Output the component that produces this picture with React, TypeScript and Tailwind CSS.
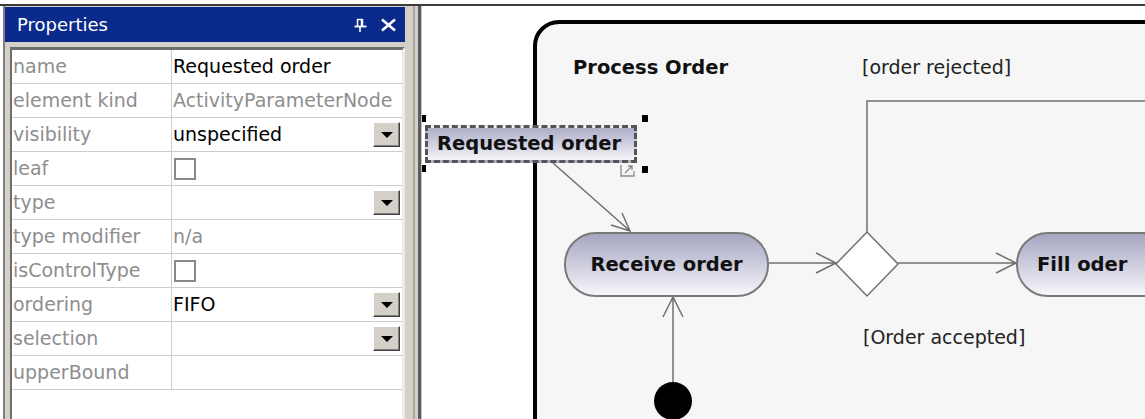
import React from "react";

type Row = {
  label: string;
  value?: string;
  muted?: boolean;
  dropdown?: boolean;
  checkbox?: boolean;
};

const rows: Row[] = [
  { label: "name", value: "Requested order" },
  { label: "element kind", value: "ActivityParameterNode", muted: true },
  { label: "visibility", value: "unspecified", dropdown: true },
  { label: "leaf", checkbox: true },
  { label: "type", dropdown: true },
  { label: "type modifier", value: "n/a", muted: true },
  { label: "isControlType", checkbox: true },
  { label: "ordering", value: "FIFO", dropdown: true },
  { label: "selection", dropdown: true },
  { label: "upperBound" },
];

const DropButton = () => (
  <div className="w-[27px] h-[25px] shrink-0 bg-[#d4d0c8] border border-t-white border-l-white border-b-[#404040] border-r-[#404040] shadow-[inset_-1px_-1px_0_#808080] flex items-center justify-center">
    <div className="w-0 h-0 border-l-[6px] border-r-[6px] border-t-[6px] border-l-transparent border-r-transparent border-t-black" />
  </div>
);

const PropertiesPanel = () => (
  <div className="w-[410px] shrink-0 bg-[#d4d0c8] border-l-2 border-[#808080] flex flex-col pt-[1px] pr-[8px]">
    <div className="h-[35px] shrink-0 bg-[#0a2a8c] flex items-center pl-[12px] pr-[8px] text-white text-[18px] leading-none">
      <span>Properties</span>
      <div className="ml-auto flex items-center gap-[13px]">
        <svg width="13" height="14" viewBox="0 0 13 14" fill="none" stroke="white">
          <path d="M3.5 1 V8 M8.5 1 V8 M3.5 1.5 H8.5" strokeWidth={1.5} />
          <path d="M7.5 1 V8" strokeWidth={1.5} />
          <path d="M0.5 8.5 H12.5" strokeWidth={1.8} />
          <path d="M6 9 V14" strokeWidth={1.6} />
        </svg>
        <svg width="17" height="14" viewBox="0 0 17 14" fill="none" stroke="white" strokeWidth={2.6}>
          <path d="M2 1.5 L15 12.5 M15 1.5 L2 12.5" />
        </svg>
      </div>
    </div>
    <div className="mt-[5px] ml-[5px] flex-1 bg-white border-t-[3px] border-l-2 border-t-[#6e6e6e] border-l-[#6e6e6e] border-r-[3px] border-r-[#ebebeb]">
      {rows.map((row) => (
        <div key={row.label} className="h-[34px] flex border-b border-[#cccccc]">
          <div className="w-[160px] shrink-0 border-r border-[#cccccc] flex items-center pl-[1px] text-[19px] leading-none text-[#8e8e8e] whitespace-nowrap overflow-hidden">
            {row.label}
          </div>
          <div className="flex-1 flex items-center pl-[1px] pr-[2px] text-[19px] leading-none whitespace-nowrap overflow-hidden">
            {row.checkbox && (
              <div className="ml-[1px] w-[22px] h-[22px] border-2 border-[#8a8a8a] bg-white" />
            )}
            {row.value && (
              <span className={row.muted ? "text-[#8e8e8e]" : "text-black"}>
                {row.value}
              </span>
            )}
            {row.dropdown && (
              <div className="ml-auto">
                <DropButton />
              </div>
            )}
          </div>
        </div>
      ))}
    </div>
  </div>
);

const Splitter = () => (
  <div className="w-[9px] shrink-0 flex">
    <div className="w-[2px] bg-[#a9a59d]" />
    <div className="w-[3px] bg-[#d4d0c8]" />
    <div className="w-[3px] bg-[#5c5c5c]" />
    <div className="w-[1px] bg-[#c4c4c4]" />
  </div>
);

const Diagram = () => (
  <div className="relative flex-1 overflow-hidden bg-white">
    <svg
      className="absolute left-0 top-0"
      width={723}
      height={413}
      viewBox="422 6 723 413"
    >
      {/* activity frame */}
      <path
        d="M535 440 V46 A24 24 0 0 1 559 22 H1160 V440 Z"
        fill="#f6f6f6"
        stroke="#000"
        strokeWidth={4}
      />
      <g fill="none" stroke="#707070" strokeWidth={1.5}>
        <path d="M553 163 L630 231 M611 225 L630 231 L622 213" />
        <path d="M769 263 H836 M816 253 L836 263 L816 273" />
        <path d="M898 263 H1016 M996 253 L1016 263 L996 273" />
        <path d="M867 232 V101 H1160" />
        <path d="M673 382 V297 M663 317 L673 297 L683 317" />
      </g>
      <path
        d="M867 232 L898 264 L867 296 L836 264 Z"
        fill="#fff"
        stroke="#707070"
        strokeWidth={1.5}
      />
      <circle cx={673} cy={401} r={19} fill="#000" />
    </svg>

    <div className="absolute left-[151px] top-[52px] font-bold text-[19.5px] leading-none text-[#111] whitespace-nowrap">
      Process Order
    </div>
    <div className="absolute left-[440px] top-[52px] text-[19px] leading-none text-[#222] whitespace-nowrap">
      [order rejected]
    </div>
    <div className="absolute left-[441px] top-[322px] text-[19px] leading-none text-[#222] whitespace-nowrap">
      [Order accepted]
    </div>

    {/* selected parameter node */}
    <div className="absolute left-[3px] top-[119px] w-[212px] h-[38px] border-[3px] border-dashed border-[#555555] bg-linear-to-b from-[#adadc9] to-[#f4f4f8] flex items-center pl-[9px] font-bold text-[19.5px] leading-none text-[#111] whitespace-nowrap">
      Requested order
    </div>
    <div className="absolute left-[-2px] top-[109px] w-[6px] h-[7px] bg-black" />
    <div className="absolute left-[-2px] top-[159px] w-[6px] h-[7px] bg-black" />
    <div className="absolute left-[220px] top-[109px] w-[6px] h-[7px] bg-black" />
    <div className="absolute left-[220px] top-[160px] w-[6px] h-[7px] bg-black" />
    <svg className="absolute left-[198px] top-[157px]" width="16" height="14" viewBox="0 0 16 14" fill="none" stroke="#8a8a8a" strokeWidth={1.3}>
      <path d="M1 2 V13 H14 V8" />
      <path d="M5 10 L12 3 M8 3 H12 V7" />
    </svg>

    <div className="absolute left-[142px] top-[226px] w-[205px] h-[65px] rounded-[32px] border-2 border-[#7a7a7a] bg-linear-to-b from-[#a6a6c2] to-[#f6f6fa] flex items-center justify-center font-bold text-[19.5px] leading-none text-[#111] whitespace-nowrap">
      Receive order
    </div>
    <div className="absolute left-[594px] top-[226px] w-[180px] h-[65px] rounded-[32px] border-2 border-[#7a7a7a] bg-linear-to-b from-[#a6a6c2] to-[#f6f6fa] flex items-center pl-[19px] font-bold text-[19.5px] leading-none text-[#111] whitespace-nowrap">
      Fill oder
    </div>
  </div>
);

export default function App() {
  return (
    <div className="w-[1145px] h-[419px] overflow-hidden bg-white flex flex-col font-['DejaVu_Sans',sans-serif]">
      <div className="h-[4px] shrink-0 bg-white" />
      <div className="h-[2px] shrink-0 bg-[#3c3c3c]" />
      <div className="flex flex-1 min-h-0">
        <div className="w-[3px] shrink-0 bg-white" />
        <PropertiesPanel />
        <Splitter />
        <Diagram />
      </div>
    </div>
  );
}
